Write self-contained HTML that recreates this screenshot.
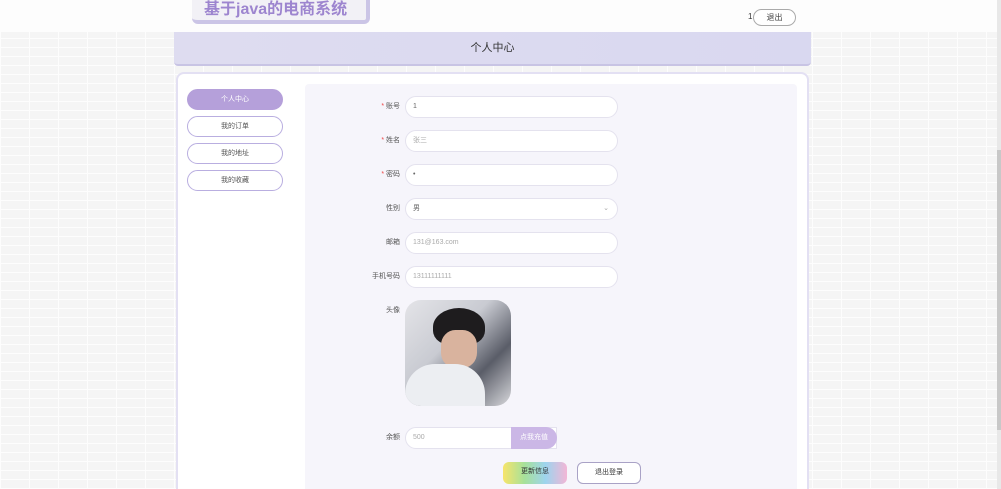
<!DOCTYPE html>
<html style="overflow:hidden;width:1001px;height:489px"><head><meta charset="utf-8"><style>
*{margin:0;padding:0;box-sizing:border-box}
body{width:1001px;height:489px;overflow:hidden;position:relative;font-family:"Liberation Sans","Noto Sans CJK SC",sans-serif;
background-color:#f5f5f5;
background-image:repeating-linear-gradient(0deg,#fdfdfd 0 1px,transparent 1px 9px),repeating-linear-gradient(90deg,#fdfdfd 0 1px,transparent 1px 29px);}
.a{position:absolute}
.hdr{left:0;top:0;width:997px;height:32px;background:#fdfdfd}
.sb{left:997px;top:0;width:4px;height:489px;background:#e8e8e8}
.sb i{position:absolute;left:0;top:150px;width:4px;height:280px;background:#c8c8c8}
.title{left:192px;top:0;width:178px;height:24px;background:#f2f1f6;border-right:4px solid #cbc5e6;border-bottom:4px solid #cbc5e6;border-radius:0 0 6px 6px;color:#9d85cf;font-weight:bold;font-size:16px;padding-left:12px;line-height:20px}
.banner{left:174px;top:32px;width:637px;height:34px;background:linear-gradient(90deg,#dedcf0,#d9d8f0);border-bottom:2px solid #c8c4e4;border-radius:0 0 4px 4px;text-align:center;line-height:32px;font-size:11px;color:#333}
.card{left:176px;top:72px;width:633px;height:417px;background:#fff;border:2px solid #e3e0f3;border-bottom:none;border-radius:8px 8px 0 0}
.panel{left:305px;top:84px;width:492px;height:405px;background:#f6f5fb;border-radius:4px 4px 0 0}
.nav{left:187px;width:96px;height:21px;border:1px solid #b9aee0;border-radius:11px;background:#fff;font-size:7px;color:#555;text-align:center;line-height:19px}
.nav.on{background:#b5a0da;color:#fff;border-color:#b5a0da}
.lbl{width:60px;left:340px;text-align:right;font-size:7px;color:#555;line-height:21px}
.lbl b{color:#e44;font-weight:normal}
.inp{left:405px;width:213px;height:22px;background:#fff;border:1px solid #e4e2ee;border-radius:11px;font-size:7px;color:#666;padding-left:7px;line-height:20px}
.ph{color:#aaa}
.btn{height:22px;width:64px;border-radius:6px;font-size:7px;text-align:center;line-height:20px;color:#333}
</style></head><body>
<div class="a hdr"></div>
<div class="a sb"><i></i></div>
<div class="a title">基于java的电商系统</div>
<div class="a" style="left:748px;top:10px;font-size:8px;color:#333;line-height:14px">1</div>
<div class="a" style="left:753px;top:9px;width:43px;height:17px;border:1px solid #aaa;border-radius:9px;background:#fff;font-size:8px;text-align:center;line-height:15px;color:#444">退出</div>
<div class="a banner">个人中心</div>
<div class="a card"></div>
<div class="a panel"></div>
<div class="a nav on" style="top:89px">个人中心</div>
<div class="a nav" style="top:116px">我的订单</div>
<div class="a nav" style="top:143px">我的地址</div>
<div class="a nav" style="top:170px">我的收藏</div>

<div class="a lbl" style="top:96px"><b>*</b> 账号</div><div class="a inp" style="top:96px">1</div>
<div class="a lbl" style="top:130px"><b>*</b> 姓名</div><div class="a inp ph" style="top:130px">张三</div>
<div class="a lbl" style="top:164px"><b>*</b> 密码</div><div class="a inp" style="top:164px">•</div>
<div class="a lbl" style="top:198px">性别</div><div class="a inp" style="top:198px">男<span style="position:absolute;right:8px;color:#aaa">⌄</span></div>
<div class="a lbl" style="top:232px">邮箱</div><div class="a inp ph" style="top:232px">131@163.com</div>
<div class="a lbl" style="top:266px">手机号码</div><div class="a inp ph" style="top:266px">13111111111</div>
<div class="a lbl" style="top:300px">头像</div>
<div class="a" style="left:405px;top:300px;width:106px;height:106px;border-radius:16px;overflow:hidden;background:linear-gradient(135deg,#e4e4e8 0%,#c9cbd2 40%,#5a5d68 70%,#d8d8dc 100%)">
<div class="a" style="left:28px;top:8px;width:52px;height:38px;border-radius:50% 50% 40% 40%;background:#1e1c1e"></div>
<div class="a" style="left:36px;top:30px;width:36px;height:38px;border-radius:40%;background:#d9b39e"></div>
<div class="a" style="left:0;top:64px;width:80px;height:50px;border-radius:30px 30px 0 0;background:#eceef2"></div>
</div>
<div class="a lbl" style="top:427px">余额</div>
<div class="a inp ph" style="top:427px;width:152px;border-radius:11px 0 0 11px">500</div>
<div class="a" style="left:511px;top:427px;width:46px;height:22px;background:#cbb7e6;border-radius:0 11px 11px 0;color:#fff;font-size:7px;text-align:center;line-height:22px">点我充值</div>
<div class="a btn" style="left:503px;top:462px;background:linear-gradient(90deg,#f7e46a,#a7e19a,#9ed4ee,#f3b6d6)">更新信息</div>
<div class="a btn" style="left:577px;top:462px;border:1px solid #a9a2c6;background:#fff">退出登录</div>
</body></html>
